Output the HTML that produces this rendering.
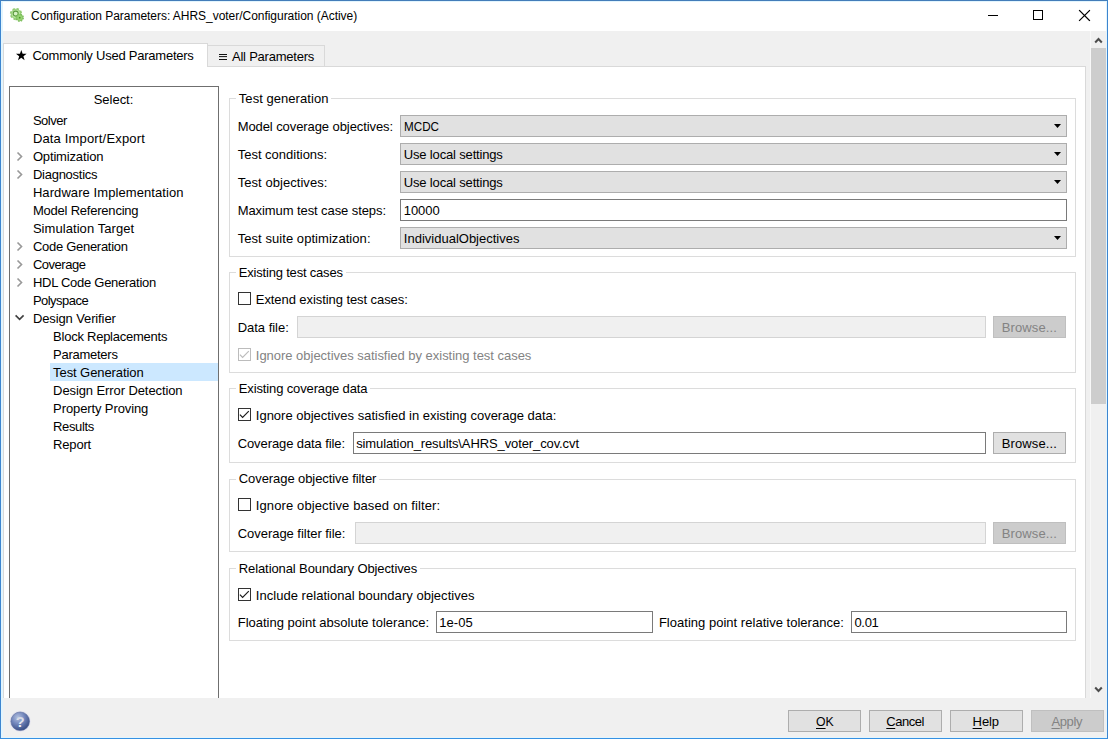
<!DOCTYPE html>
<html>
<head>
<meta charset="utf-8">
<title>Configuration Parameters: AHRS_voter/Configuration (Active)</title>
<style>
*{box-sizing:border-box;margin:0;padding:0}
html,body{width:1108px;height:739px;overflow:hidden;background:#f0f0f0}
body{position:relative;font-family:"Liberation Sans",sans-serif;font-size:13px;color:#000}
.a{position:absolute}
.t{position:absolute;white-space:pre;line-height:18px;height:18px;font-family:"Liberation Sans",sans-serif}
.t u{text-decoration:underline;text-decoration-thickness:1px;text-underline-offset:2px}
#win{left:0;top:0;width:1108px;height:739px;border:1px solid #3d85cf;border-top-color:#437db9;border-bottom-color:#3690e2;z-index:50;pointer-events:none}
#win2{left:1px;top:1px;width:1106px;height:737px;border:1px solid #e2f5fe;border-left-width:2px;z-index:49;pointer-events:none}
#titlebar{left:1px;top:1px;width:1106px;height:30px;background:#fff}
#tabpane{left:3px;top:66px;width:1083px;height:632px;background:#fff;border:1px solid #d9d9d9;border-bottom:none}
#tab1{left:3px;top:43px;width:205px;height:24px;background:#fff;border:1px solid #d9d9d9;border-bottom:none}
#tab2{left:207px;top:45px;width:118px;height:22px;background:#f0f0f0;border:1px solid #d9d9d9}
#tree{left:9px;top:86px;width:210px;height:612px;background:#fff;border:1px solid #6f6f6f;border-bottom:none}
#sel{left:50px;top:363px;width:168px;height:18px;background:#cce8ff}
.grp{position:absolute;left:229px;width:847px;border:1px solid #dcdcdc;background:#fff}
.dd{position:absolute;left:400px;width:667px;height:22px;background:#e1e1e1;border:1px solid #adadad}
.dd svg{position:absolute;right:5px;top:8px}
.ed{position:absolute;height:22px;background:#fff;border:1px solid #7a7a7a}
.ed.dis{background:#f0f0f0;border-color:#d4d4d4}
.btn{position:absolute;height:22px;background:#e1e1e1;border:1px solid #adadad}
.btn.dis{background:#cccccc;border-color:#bfbfbf}
.cb{position:absolute;left:238px;width:13px;height:13px;background:#fff;border:1px solid #333}
.cb.dis{border-color:#bcbcbc}
.cb svg{position:absolute;left:0;top:0}
#sb{left:1090px;top:31px;width:17px;height:667px;background:#f0f0f0;border-left:1px solid #f8f8f8;border-right:1px solid #e6f6fd}
#thumb{left:1091px;top:48px;width:15px;height:356px;background:#cdcdcd}
</style>
</head>
<body>
<div class="a" id="titlebar"></div>
<!-- title icon: gears -->
<svg class="a" style="left:8px;top:6px" width="18" height="18" viewBox="8 6 18 18">
 <circle cx="16" cy="14" r="5.300" fill="none" stroke="#93cc74" stroke-width="1.700" stroke-dasharray="2.300 1.863"/>
 <circle cx="16" cy="14" r="4.800" fill="#b6e49b" stroke="#8cc76d" stroke-width="0.800"/>
 <circle cx="15.700" cy="13.600" r="2.500" fill="#d6f2c4" stroke="#5b9a3f" stroke-width="1.050"/>
 <circle cx="19.700" cy="17.700" r="3.500" fill="none" stroke="#7cbd5c" stroke-width="1.500" stroke-dasharray="1.500 1.249"/>
 <circle cx="19.700" cy="17.700" r="3.100" fill="#98d574" stroke="#78ba58" stroke-width="0.700"/>
 <rect x="18.900" y="16.900" width="1.600" height="1.600" fill="#4a9a26"/>
</svg>
<!-- window controls -->
<svg class="a" style="left:980px;top:1px" width="126" height="30" viewBox="0 0 126 30">
 <g stroke="#000" stroke-width="1" fill="none" shape-rendering="crispEdges">
  <path d="M8 14.5h10"/>
  <rect x="53.500" y="9.500" width="9" height="9"/>
 </g>
 <path d="M99.500 9.500l10 10M109.500 9.500l-10 10" stroke="#000" stroke-width="1.150" stroke-linecap="square" fill="none"/>
</svg>

<div class="a" id="tabpane"></div>
<div class="a" id="tab2"></div>
<div class="a" id="tab1"></div>
<!-- star + hamburger glyphs -->
<svg class="a" style="left:14px;top:48px" width="16" height="16" viewBox="0 0 16 16"><path d="M7.30 2.00L8.62 5.79L12.63 5.87L9.43 8.29L10.59 12.13L7.30 9.84L4.01 12.13L5.17 8.29L1.97 5.87L5.98 5.79z" fill="#000"/></svg>
<svg class="a" style="left:219px;top:52px" width="9" height="9" viewBox="0 0 9 9"><path d="M0 2.500h8M0 4.600h8M0 7.500h8" stroke="#111" stroke-width="1"/></svg>

<div class="a" id="tree"></div>
<div class="a" id="sel"></div>
<!-- tree arrows -->
<svg class="a" style="left:14px;top:148px" width="14" height="180" viewBox="0 0 14 180" fill="none" stroke="#999999" stroke-width="1.650">
 <path d="M3.500 4.500l4 4-4 4"/>
 <path d="M3.500 22.500l4 4-4 4"/>
 <path d="M3.500 94.500l4 4-4 4"/>
 <path d="M3.500 112.500l4 4-4 4"/>
 <path d="M3.500 130.500l4 4-4 4"/>
 <path d="M1.600 167.400l4 4 4-4" stroke="#404040"/>
</svg>

<!-- group boxes -->
<div class="grp" style="top:98px;height:159px"></div>
<div class="grp" style="top:272px;height:101px"></div>
<div class="grp" style="top:388px;height:75px"></div>
<div class="grp" style="top:479px;height:73px"></div>
<div class="grp" style="top:568px;height:73px"></div>

<!-- group 1 controls -->
<div class="dd" style="top:115px"><svg width="7" height="4" viewBox="0 0 7 4"><path d="M0 0h7L3.500 4z" fill="#000"/></svg></div>
<div class="dd" style="top:143px"><svg width="7" height="4" viewBox="0 0 7 4"><path d="M0 0h7L3.500 4z" fill="#000"/></svg></div>
<div class="dd" style="top:171px"><svg width="7" height="4" viewBox="0 0 7 4"><path d="M0 0h7L3.500 4z" fill="#000"/></svg></div>
<div class="ed" style="left:400px;top:199px;width:667px"></div>
<div class="dd" style="top:227px"><svg width="7" height="4" viewBox="0 0 7 4"><path d="M0 0h7L3.500 4z" fill="#000"/></svg></div>

<!-- group 2 -->
<div class="cb" style="top:292px"></div>
<div class="ed dis" style="left:297px;top:316px;width:689px"></div>
<div class="btn dis" style="left:993px;top:316px;width:73px"></div>
<div class="cb dis" style="top:348px"><svg width="11" height="11" viewBox="0 0 11 11"><path d="M0.900 5.600L3.600 8.500L9.800 2.100" fill="none" stroke="#bcbcbc" stroke-width="1.150"/></svg></div>

<!-- group 3 -->
<div class="cb" style="top:408px"><svg width="11" height="11" viewBox="0 0 11 11"><path d="M0.900 5.600L3.600 8.500L9.800 2.100" fill="none" stroke="#1a1a1a" stroke-width="1.150"/></svg></div>
<div class="ed" style="left:353px;top:432px;width:633px"></div>
<div class="btn" style="left:993px;top:432px;width:73px"></div>

<!-- group 4 -->
<div class="cb" style="top:498px"></div>
<div class="ed dis" style="left:355px;top:522px;width:631px"></div>
<div class="btn dis" style="left:993px;top:522px;width:73px"></div>

<!-- group 5 -->
<div class="cb" style="top:588px"><svg width="11" height="11" viewBox="0 0 11 11"><path d="M0.900 5.600L3.600 8.500L9.800 2.100" fill="none" stroke="#1a1a1a" stroke-width="1.150"/></svg></div>
<div class="ed" style="left:436px;top:611px;width:217px"></div>
<div class="ed" style="left:851px;top:611px;width:216px"></div>

<!-- scrollbar -->
<div class="a" id="sb"></div>
<div class="a" id="thumb"></div>
<svg class="a" style="left:1091px;top:31px" width="16" height="667" viewBox="0 0 16 667" fill="none" stroke="#4d4d4d" stroke-width="2">
 <path d="M4.200 11.500l3.300-3.500 3.300 3.500"/>
 <path d="M4.200 656.500l3.300 3.500 3.300-3.500"/>
</svg>

<!-- bottom buttons -->
<div class="btn" style="left:788px;top:710px;width:73px"></div>
<div class="btn" style="left:869px;top:710px;width:73px"></div>
<div class="btn" style="left:950px;top:710px;width:73px"></div>
<div class="btn dis" style="left:1031px;top:710px;width:73px"></div>

<!-- help icon -->
<svg class="a" style="left:8px;top:709px" width="24" height="24" viewBox="8 709 24 24">
 <defs>
  <radialGradient id="hg" cx="0.380" cy="0.300" r="0.750"><stop offset="0" stop-color="#b4c1df"/><stop offset="0.450" stop-color="#7488bd"/><stop offset="1" stop-color="#34487f"/></radialGradient>
  <linearGradient id="hq" x1="0" y1="0" x2="0" y2="1"><stop offset="0" stop-color="#c4cbdc"/><stop offset="1" stop-color="#ffffff"/></linearGradient>
 </defs>
 <circle cx="20.200" cy="721.300" r="10.600" fill="#e6e6f0"/>
 <circle cx="20.200" cy="721.300" r="9.300" fill="url(#hg)" stroke="#5a6b9c" stroke-width="0.600"/>
 <text x="20.200" y="726.600" font-family="Liberation Sans, sans-serif" font-size="14.500" font-weight="bold" fill="url(#hq)" text-anchor="middle">?</text>
</svg>

<div class="t" style="left:31.00px;top:6.5px;font-size:12px;letter-spacing:-0.034px;color:#000;">Configuration Parameters: AHRS_voter/Configuration (Active)</div>
<div class="t" style="left:32.40px;top:46.5px;font-size:13px;letter-spacing:-0.235px;color:#000;">Commonly Used Parameters</div>
<div class="t" style="left:232.00px;top:47.5px;font-size:13px;letter-spacing:-0.231px;color:#000;">All Parameters</div>
<div class="t" style="left:93.70px;top:90.5px;font-size:13px;letter-spacing:-0.017px;color:#000;">Select:</div>
<div class="t" style="left:32.90px;top:112.0px;font-size:13px;letter-spacing:-0.460px;color:#000;">Solver</div>
<div class="t" style="left:32.90px;top:130.0px;font-size:13px;letter-spacing:0.165px;color:#000;">Data Import/Export</div>
<div class="t" style="left:32.90px;top:148.0px;font-size:13px;letter-spacing:-0.155px;color:#000;">Optimization</div>
<div class="t" style="left:32.90px;top:166.0px;font-size:13px;letter-spacing:-0.250px;color:#000;">Diagnostics</div>
<div class="t" style="left:32.90px;top:184.0px;font-size:13px;letter-spacing:0.077px;color:#000;">Hardware Implementation</div>
<div class="t" style="left:32.90px;top:202.0px;font-size:13px;letter-spacing:-0.213px;color:#000;">Model Referencing</div>
<div class="t" style="left:32.90px;top:220.0px;font-size:13px;letter-spacing:0.062px;color:#000;">Simulation Target</div>
<div class="t" style="left:32.90px;top:238.0px;font-size:13px;letter-spacing:-0.279px;color:#000;">Code Generation</div>
<div class="t" style="left:32.90px;top:256.0px;font-size:13px;letter-spacing:-0.471px;color:#000;">Coverage</div>
<div class="t" style="left:32.90px;top:274.0px;font-size:13px;letter-spacing:-0.267px;color:#000;">HDL Code Generation</div>
<div class="t" style="left:32.90px;top:292.0px;font-size:13px;letter-spacing:-0.525px;color:#000;">Polyspace</div>
<div class="t" style="left:32.90px;top:310.0px;font-size:13px;letter-spacing:-0.114px;color:#000;">Design Verifier</div>
<div class="t" style="left:53.10px;top:328.0px;font-size:13px;letter-spacing:-0.247px;color:#000;">Block Replacements</div>
<div class="t" style="left:53.10px;top:346.0px;font-size:13px;letter-spacing:-0.267px;color:#000;">Parameters</div>
<div class="t" style="left:53.10px;top:364.0px;font-size:13px;letter-spacing:-0.086px;color:#000;">Test Generation</div>
<div class="t" style="left:53.10px;top:382.0px;font-size:13px;letter-spacing:-0.095px;color:#000;">Design Error Detection</div>
<div class="t" style="left:53.10px;top:400.0px;font-size:13px;letter-spacing:-0.107px;color:#000;">Property Proving</div>
<div class="t" style="left:53.10px;top:418.0px;font-size:13px;letter-spacing:-0.367px;color:#000;">Results</div>
<div class="t" style="left:53.10px;top:436.0px;font-size:13px;letter-spacing:-0.180px;color:#000;">Report</div>
<div class="t" style="left:237.70px;top:118.0px;font-size:13px;letter-spacing:-0.084px;color:#000;">Model coverage objectives:</div>
<div class="t" style="left:237.70px;top:146.0px;font-size:13px;letter-spacing:-0.007px;color:#000;">Test conditions:</div>
<div class="t" style="left:237.70px;top:174.0px;font-size:13px;letter-spacing:0.053px;color:#000;">Test objectives:</div>
<div class="t" style="left:237.70px;top:202.0px;font-size:13px;letter-spacing:-0.083px;color:#000;">Maximum test case steps:</div>
<div class="t" style="left:237.70px;top:230.0px;font-size:13px;letter-spacing:0.057px;color:#000;">Test suite optimization:</div>
<div class="t" style="left:403.90px;top:118.0px;font-size:13px;color:#000;transform:scaleX(0.8973);transform-origin:0 0;">MCDC</div>
<div class="t" style="left:403.80px;top:146.0px;font-size:13px;letter-spacing:-0.165px;color:#000;">Use local settings</div>
<div class="t" style="left:403.80px;top:174.0px;font-size:13px;letter-spacing:-0.165px;color:#000;">Use local settings</div>
<div class="t" style="left:403.80px;top:202.0px;font-size:13px;letter-spacing:-0.075px;color:#000;">10000</div>
<div class="t" style="left:403.80px;top:230.0px;font-size:13px;letter-spacing:0.005px;color:#000;">IndividualObjectives</div>
<div class="t" style="left:255.80px;top:290.5px;font-size:13px;letter-spacing:-0.073px;color:#000;">Extend existing test cases:</div>
<div class="t" style="left:237.70px;top:319.0px;font-size:13px;letter-spacing:-0.022px;color:#000;">Data file:</div>
<div class="t" style="left:255.80px;top:347.0px;font-size:13px;letter-spacing:-0.024px;color:#838383;">Ignore objectives satisfied by existing test cases</div>
<div class="t" style="left:1001.80px;top:319.0px;font-size:13px;letter-spacing:0.100px;color:#838383;">Browse...</div>
<div class="t" style="left:255.80px;top:406.5px;font-size:13px;letter-spacing:-0.000px;color:#000;">Ignore objectives satisfied in existing coverage data:</div>
<div class="t" style="left:237.70px;top:435.0px;font-size:13px;letter-spacing:-0.094px;color:#000;">Coverage data file:</div>
<div class="t" style="left:356.20px;top:435.0px;font-size:13px;letter-spacing:-0.106px;color:#000;">simulation_results\AHRS_voter_cov.cvt</div>
<div class="t" style="left:1001.80px;top:435.0px;font-size:13px;letter-spacing:0.100px;color:#000;">Browse...</div>
<div class="t" style="left:255.80px;top:496.5px;font-size:13px;letter-spacing:0.116px;color:#000;">Ignore objective based on filter:</div>
<div class="t" style="left:237.70px;top:525.0px;font-size:13px;letter-spacing:-0.035px;color:#000;">Coverage filter file:</div>
<div class="t" style="left:1001.80px;top:525.0px;font-size:13px;letter-spacing:0.100px;color:#838383;">Browse...</div>
<div class="t" style="left:255.80px;top:586.5px;font-size:13px;letter-spacing:0.032px;color:#000;">Include relational boundary objectives</div>
<div class="t" style="left:237.70px;top:613.5px;font-size:13px;letter-spacing:0.000px;color:#000;">Floating point absolute tolerance:</div>
<div class="t" style="left:439.20px;top:613.5px;font-size:13px;letter-spacing:0.050px;color:#000;">1e-05</div>
<div class="t" style="left:658.90px;top:613.5px;font-size:13px;letter-spacing:0.021px;color:#000;">Floating point relative tolerance:</div>
<div class="t" style="left:854.40px;top:613.5px;font-size:13px;letter-spacing:-0.300px;color:#000;">0.01</div>
<div class="t" style="left:238.80px;top:89.5px;font-size:13px;letter-spacing:0.050px;color:#000;background:#fff;padding:0 3px;margin-left:-3px;">Test generation</div>
<div class="t" style="left:238.80px;top:263.5px;font-size:13px;letter-spacing:-0.194px;color:#000;background:#fff;padding:0 3px;margin-left:-3px;">Existing test cases</div>
<div class="t" style="left:238.80px;top:379.5px;font-size:13px;letter-spacing:-0.133px;color:#000;background:#fff;padding:0 3px;margin-left:-3px;">Existing coverage data</div>
<div class="t" style="left:238.80px;top:470.0px;font-size:13px;letter-spacing:-0.079px;color:#000;background:#fff;padding:0 3px;margin-left:-3px;">Coverage objective filter</div>
<div class="t" style="left:238.80px;top:559.5px;font-size:13px;letter-spacing:-0.103px;color:#000;background:#fff;padding:0 3px;margin-left:-3px;">Relational Boundary Objectives</div>
<div class="t" style="left:815.90px;top:713.0px;font-size:13px;color:#000;transform:scaleX(0.9444);transform-origin:0 0;"><u>O</u>K</div>
<div class="t" style="left:886.30px;top:713.0px;font-size:13px;letter-spacing:-0.460px;color:#000;"><u>C</u>ancel</div>
<div class="t" style="left:972.60px;top:713.0px;font-size:13px;letter-spacing:-0.100px;color:#000;"><u>H</u>elp</div>
<div class="t" style="left:1051.50px;top:713.0px;font-size:13px;letter-spacing:-0.400px;color:#838383;"><u>A</u>pply</div>
<div class="a" id="win2"></div>
<div class="a" id="win"></div>
</body>
</html>
